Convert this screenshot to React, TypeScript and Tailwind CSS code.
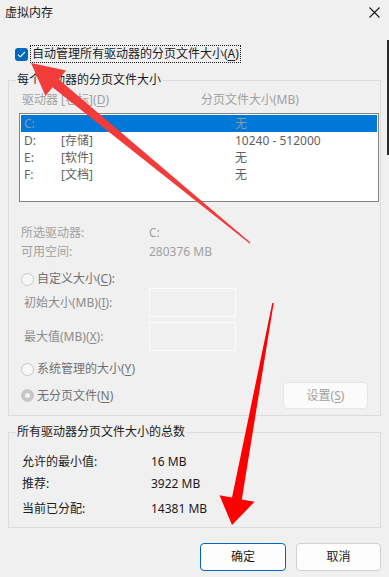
import React from 'react';

const drives = [
  { letter: 'C:', label: '', size: '无', selected: true },
  { letter: 'D:', label: '[存储]', size: '10240 - 512000', selected: false },
  { letter: 'E:', label: '[软件]', size: '无', selected: false },
  { letter: 'F:', label: '[文档]', size: '无', selected: false },
];

function Radio({ checked }: { checked?: boolean }) {
  if (checked) {
    return (
      <span className="flex h-[13px] w-[13px] items-center justify-center rounded-full bg-[#c6c6c6]">
        <span className="h-[5px] w-[5px] rounded-full bg-[#f3f3f3]" />
      </span>
    );
  }
  return <span className="block h-[13px] w-[13px] rounded-full border border-[#c9c9c9] bg-[#f6f6f6]" />;
}

function Legend({ children }: { children: React.ReactNode }) {
  return <div className="-mt-[9px] ml-[7px] h-4 w-fit bg-[#f0f0f0] px-[1px] leading-4">{children}</div>;
}

function Arrows() {
  return (
    <svg className="pointer-events-none absolute left-0 top-0" width="389" height="577" viewBox="0 0 389 577">
      {/* arrow pointing at the checkbox */}
      <polygon
        fill="#f23c3c"
        points="250.4,242.5 58.9,79.4 66,70.5 31,63 45.5,96 52.5,87.2 249.6,243.5"
      />
      {/* arrow pointing at the OK button */}
      <polygon
        fill="#ff0000"
        points="273.7,303.1 241.8,499.4 254.5,501.8 232,525 219.5,495.3 232,497.6 272.3,302.9"
      />
    </svg>
  );
}

export default function App() {
  return (
    <div className="relative flex h-[577px] w-[389px] flex-col overflow-hidden bg-[#f0f0f0] font-['Noto_Sans','Noto_Sans_CJK_SC',sans-serif] text-[12px] leading-4 text-[#1b1b1b]">
      {/* title bar */}
      <div className="flex h-[30px] items-start justify-between pt-[5px]">
        <span className="ml-[5px] leading-4">虚拟内存</span>
        <svg className="mr-[9px] mt-[2px]" width="11" height="11" viewBox="0 0 11 11">
          <path d="M0.5 0.5L10.5 10.5M10.5 0.5L0.5 10.5" stroke="#1b1b1b" strokeWidth="1.1" />
        </svg>
      </div>

      {/* auto manage checkbox */}
      <div className="mt-[15px] flex h-[18px] items-center">
        <span className="ml-[15px] flex h-[13px] w-[13px] items-center justify-center rounded-[3px] bg-[#0067c0]">
          <svg width="9" height="7" viewBox="0 0 9 7">
            <path d="M1 3.6L3.3 5.8L8 1" fill="none" stroke="#ffffff" strokeWidth="1.1" />
          </svg>
        </span>
        <span className="ml-[2px] flex h-[18px] items-center border border-dotted border-[#1b1b1b] px-[1px]">
          自动管理所有驱动器的分页文件大小(<u className="underline-offset-2">A</u>)
        </span>
      </div>

      {/* per-drive group */}
      <div className="mx-[8px] mt-[17px] flex h-[336px] flex-col border border-[#dcdcdc]">
        <Legend>每个驱动器的分页文件大小</Legend>

        <div className="mt-[4px] flex h-4 text-[#a0a0a0]">
          <span className="ml-[13px] w-[179px]">
            驱动器 [卷标](<u className="underline-offset-2">D</u>)
          </span>
          <span>分页文件大小(MB)</span>
        </div>

        <div className="ml-[10px] mt-[5px] flex h-[89px] w-[360px] flex-col border border-[#848484] bg-white p-[1px]">
          {drives.map((d) => (
            <div
              key={d.letter}
              className={`flex h-[17px] items-center pl-[3px] ${d.selected ? 'bg-[#0078d7] text-[#8d9aa8]' : 'text-[#5f5f5f]'}`}
            >
              <span className="w-[37px]">{d.letter}</span>
              <span className="w-[174px]">{d.label}</span>
              <span>{d.size}</span>
            </div>
          ))}
        </div>

        <div className="mt-[23px] flex h-4 text-[#a0a0a0]">
          <span className="ml-[12px] w-[128px]">所选驱动器:</span>
          <span>C:</span>
        </div>
        <div className="mt-[3px] flex h-4 text-[#a0a0a0]">
          <span className="ml-[12px] w-[128px]">可用空间:</span>
          <span>280376 MB</span>
        </div>

        <div className="mt-[11px] flex h-4 items-center text-[#707070]">
          <span className="ml-[12px]">
            <Radio />
          </span>
          <span className="ml-[3px]">
            自定义大小(<u className="underline-offset-2">C</u>):
          </span>
        </div>

        <div className="mt-[1px] flex h-[29px] items-center text-[#8c8c8c]">
          <span className="ml-[15px] w-[125px]">
            初始大小(MB)(<u className="underline-offset-2">I</u>):
          </span>
          <span className="h-[29px] w-[87px] border border-[#fbfbfb]" />
        </div>
        <div className="mt-[5px] flex h-[29px] items-center text-[#8c8c8c]">
          <span className="ml-[15px] w-[125px]">
            最大值(MB)(<u className="underline-offset-2">X</u>):
          </span>
          <span className="h-[29px] w-[87px] border border-[#fbfbfb]" />
        </div>

        <div className="mt-[10px] flex h-4 items-center text-[#707070]">
          <span className="ml-[12px]">
            <Radio />
          </span>
          <span className="ml-[3px]">
            系统管理的大小(<u className="underline-offset-2">Y</u>)
          </span>
        </div>

        <div className="mt-[5px] flex h-[27px] items-center text-[#707070]">
          <span className="ml-[12px]">
            <Radio checked />
          </span>
          <span className="ml-[3px] w-[246px]">
            无分页文件(<u className="underline-offset-2">N</u>)
          </span>
          <span className="flex h-[27px] w-[85px] items-center justify-center rounded-[4px] border border-[#e6e6e6] bg-[#fbfbfb] text-[#a0a0a0]">
            设置(<u className="underline-offset-2">S</u>)
          </span>
        </div>
      </div>

      {/* totals group */}
      <div className="mx-[8px] mt-[16px] flex h-[96px] flex-col border border-[#dcdcdc]">
        <Legend>所有驱动器分页文件大小的总数</Legend>
        <div className="mt-[14px] flex h-4">
          <span className="ml-[13px] w-[129px]">允许的最小值:</span>
          <span>16 MB</span>
        </div>
        <div className="mt-[6px] flex h-4">
          <span className="ml-[13px] w-[129px]">推荐:</span>
          <span>3922 MB</span>
        </div>
        <div className="mt-[9px] flex h-4">
          <span className="ml-[13px] w-[129px]">当前已分配:</span>
          <span>14381 MB</span>
        </div>
      </div>

      {/* dialog buttons */}
      <div className="mt-[15px] flex h-[28px] gap-[10px] pl-[200px]">
        <button className="h-[28px] w-[86px] rounded-[4px] border border-[#0067c0] bg-[#fdfdfd] text-[12px]">
          确定
        </button>
        <button className="h-[28px] w-[85px] rounded-[4px] border border-[#d0d0d0] bg-[#fdfdfd] text-[12px]">
          取消
        </button>
      </div>

      {/* edge of the window behind */}
      <div className="absolute right-0 top-[40px] h-[115px] w-[2px] bg-[#2b2b2b]" />

      <Arrows />
    </div>
  );
}
